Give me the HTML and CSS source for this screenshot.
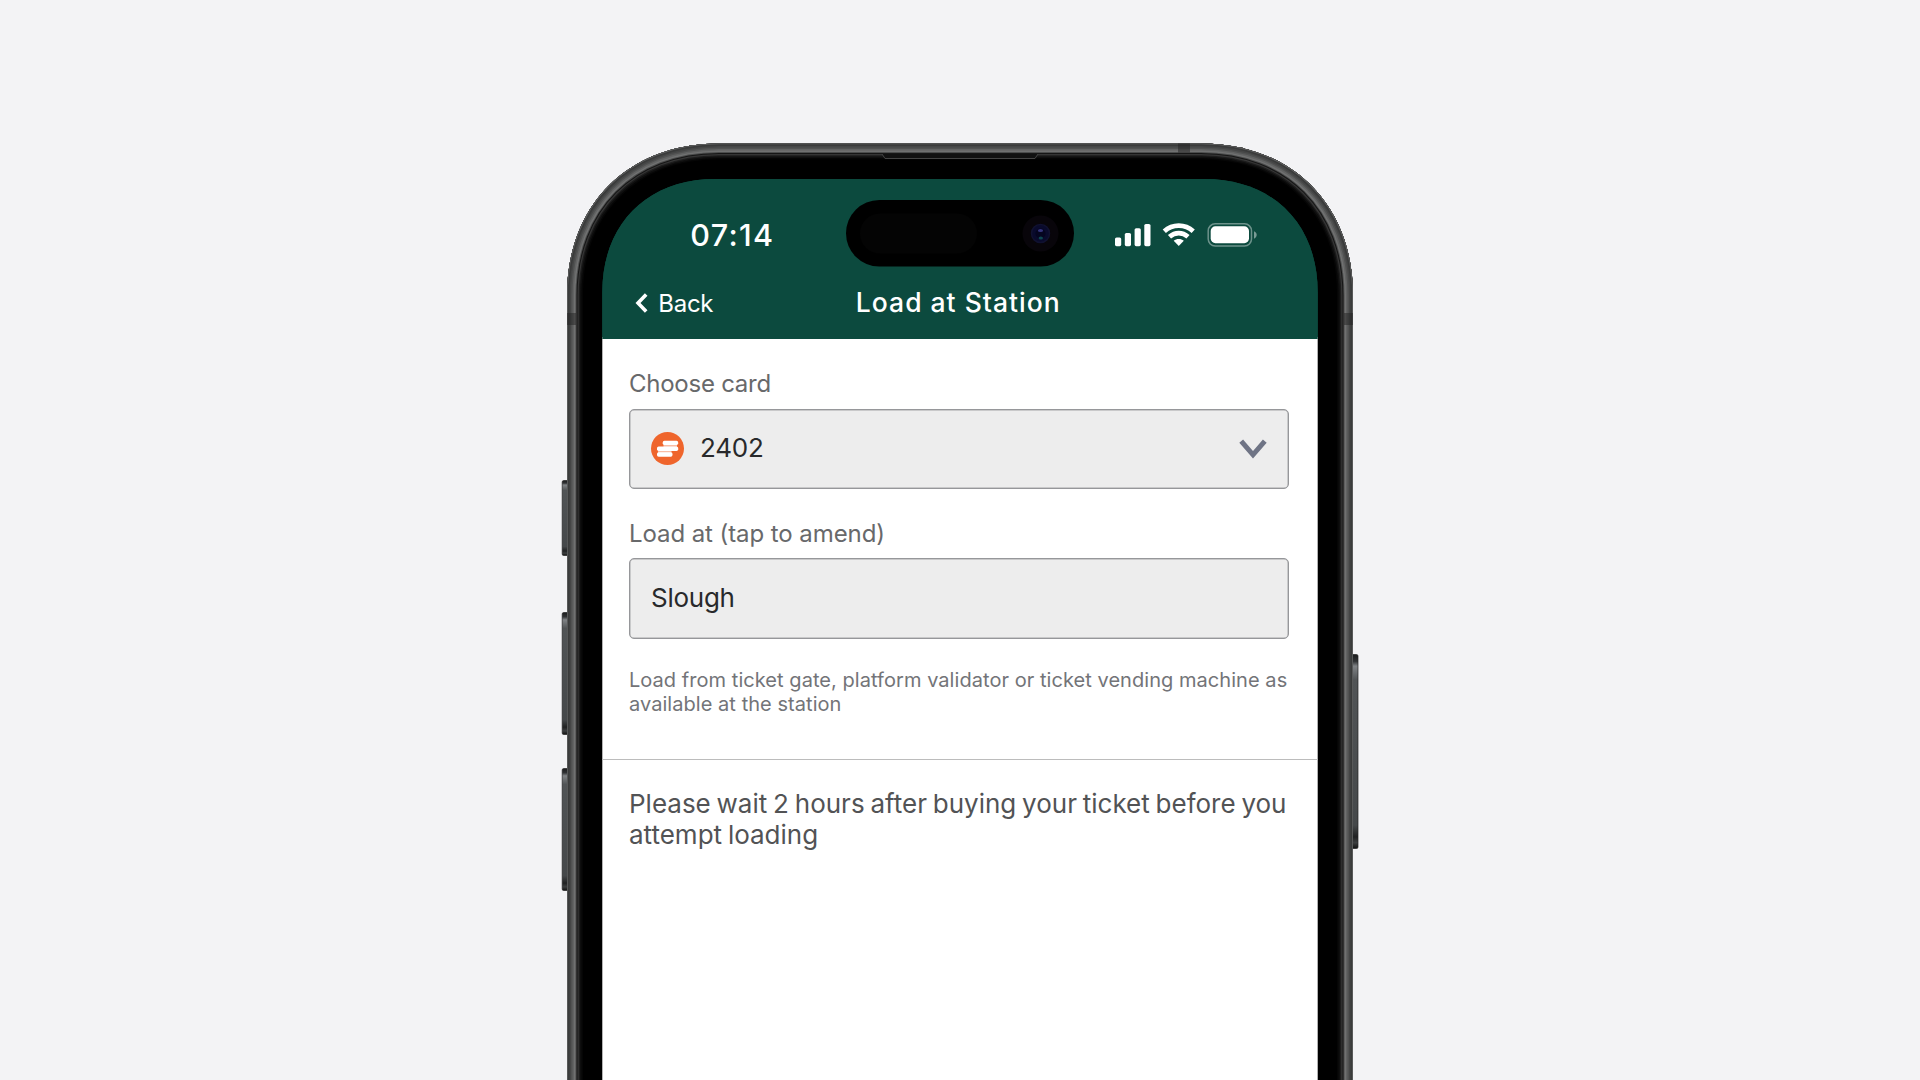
FILE: index.html
```html
<!DOCTYPE html>
<html lang="en">
<head>
<meta charset="utf-8">
<title>Load at Station</title>
<link rel="stylesheet" href="styles.css">
</head>
<body>
<div class="phone">
  <svg class="chassis" width="798" height="937" viewBox="-6 0 798 937" aria-hidden="true">
    <defs>
      <path id="body" d="M0 1300V152.400C0 61.700 61.300 .4 152 .4H634C724.700 .4 786 61.700 786 152.400V1300Z"/>
      <clipPath id="bodyClip"><use href="#body"/></clipPath>
      <linearGradient id="key" x1="0" y1="0" x2="0" y2="1">
        <stop offset="0" stop-color="#1b1c1d"/><stop offset=".035" stop-color="#303234"/><stop offset=".06" stop-color="#808386"/><stop offset=".13" stop-color="#515456"/>
        <stop offset=".88" stop-color="#45484a"/><stop offset=".94" stop-color="#202122"/><stop offset=".97" stop-color="#3c3e3f"/><stop offset="1" stop-color="#111"/>
      </linearGradient>
    </defs>
    <g fill="url(#key)" stroke="#222" stroke-width=".7">
      <rect x="-4.8" y="337.500" width="8" height="75" rx="1.500"/>
      <rect x="-4.8" y="469.500" width="8" height="122" rx="1.500"/>
      <rect x="-4.8" y="625.500" width="8" height="122" rx="1.500"/>
      <rect x="783" y="511.500" width="8" height="194" rx="1.500"/>
    </g>
    <g clip-path="url(#bodyClip)" fill="none">
      <use href="#body" fill="#000"/>
      <use href="#body" stroke="#050505" stroke-width="32"/>
      <use href="#body" stroke="#0e0e0e" stroke-width="29"/>
      <use href="#body" stroke="#1c1c1c" stroke-width="26"/>
      <use href="#body" stroke="#353535" stroke-width="23.500"/>
      <use href="#body" stroke="#161616" stroke-width="21"/>
      <use href="#body" stroke="#4c4d4d" stroke-width="19"/>
      <use href="#body" stroke="#707171" stroke-width="17"/>
      <use href="#body" stroke="#626363" stroke-width="14"/>
      <use href="#body" stroke="#515252" stroke-width="11"/>
      <use href="#body" stroke="#454646" stroke-width="8"/>
      <use href="#body" stroke="#3a3b3b" stroke-width="5"/>
      <use href="#body" stroke="#606161" stroke-width="1.600"/>
      <g fill="#222" fill-opacity=".5">
        <rect x="0" y="170" width="9" height="12"/>
        <rect x="777" y="170" width="9" height="12"/>
        <rect x="611" y="0" width="12" height="9.500"/>
      </g>
      <path d="M315 11L318 15.500H468L471 11Z" fill="#111"/>
      <path d="M315 11L318 15.500H468L471 11" stroke="#444" stroke-width="1"/>
    </g>
  </svg>

  <main class="screen">
    <header class="header">
      <div class="status">
        <span class="time">07:14</span>
        <svg class="indicators" width="144" height="26" viewBox="0 0 144 26" fill="#fff" aria-hidden="true">
          <rect x="1" y="15.500" width="6.200" height="8.700" rx="1.600"/>
          <rect x="10.800" y="11" width="6.200" height="13.200" rx="1.600"/>
          <rect x="20.600" y="6.200" width="6.200" height="18" rx="1.600"/>
          <rect x="30.300" y="2" width="6.200" height="22.200" rx="1.600"/>
          <g fill="none" stroke="#fff" stroke-width="4.700">
            <path d="M50.300 9.300C58.500 1.700 71 1.700 79.200 9.300"/>
            <path d="M55.500 14.800C61 9.900 68.500 9.900 74 14.800"/>
          </g>
          <path d="M59.700 18.800C62.500 16.300 67 16.300 69.800 18.800L64.750 24Z"/>
          <rect x="94.200" y="1.800" width="43.300" height="22.200" rx="7" fill="none" stroke="#fff" stroke-opacity=".4" stroke-width="1.500"/>
          <rect x="96.700" y="4.300" width="38.300" height="16.900" rx="4.700"/>
          <path d="M140 9.300C143.600 10.700 143.600 15.300 140 16.700Z" fill-opacity=".45"/>
        </svg>
      </div>
      <nav class="nav">
        <a class="back">
          <svg width="13" height="20" viewBox="0 0 13 20" fill="none" stroke="#fff" stroke-width="3.600" aria-hidden="true"><path d="M11.200 1.400L3 10L11.200 18.600"/></svg>
          <span>Back</span>
        </a>
        <h1 class="title">Load at Station</h1>
      </nav>
    </header>

    <section class="form">
      <div class="label label-card">Choose card</div>
      <div class="field">
        <svg class="brand" width="33" height="33" viewBox="0 0 33 33" aria-hidden="true">
          <circle cx="16.500" cy="16.500" r="16.500" fill="#ef652c"/>
          <g fill="#fff">
            <path fill="#f9bda4" d="M12.500 12H26V15H12.500ZM7 18.500H20.500V21H7Z"/>
            <rect x="11.700" y="8.800" width="15.500" height="4.200" rx="1.700"/>
            <rect x="6" y="14.400" width="21.200" height="4.500" rx="1.700"/>
            <rect x="6" y="20.200" width="15.500" height="4.500" rx="1.700"/>
          </g>
        </svg>
        <span class="value number">2402</span>
        <svg class="chevron" width="28" height="21" viewBox="0 0 28 21" fill="none" stroke="#6f7485" stroke-width="5" aria-hidden="true"><path d="M2.200 2.200L14 15.800L25.800 2.200"/></svg>
      </div>
      <div class="label label-load">Load at (tap to amend)</div>
      <div class="field"><span class="value">Slough</span></div>
      <p class="hint">Load from ticket gate, platform validator or ticket vending machine as<br>available at the station</p>
    </section>
    <p class="notice">Please wait 2 hours after buying your ticket before you<br>attempt loading</p>
  </main>

  <svg class="island" width="228" height="67" viewBox="0 0 228 67" aria-hidden="true">
    <rect width="228" height="66.500" rx="33.250" fill="#000"/>
    <rect x="14" y="13.500" width="117" height="40" rx="20" fill="#040404"/>
    <circle cx="194.500" cy="33.500" r="18" fill="#08050a"/>
    <circle cx="194.500" cy="33.500" r="9" fill="#090a2c" stroke="#101130" stroke-width="1.500"/>
    <circle cx="194.500" cy="33.500" r="5" fill="#050520"/>
    <ellipse cx="194.500" cy="30.500" rx="2.600" ry="1.500" fill="#34347c"/>
    <ellipse cx="194.800" cy="38" rx="2.200" ry="1.500" fill="#0d4650"/>
  </svg>
</div>
</body>
</html>
```

FILE: styles.css
```css
* { box-sizing: border-box; }

body {
  margin: 0;
  height: 1080px;
  overflow: hidden;
  display: flex;
  justify-content: center;
  align-items: flex-start;
  background: #f3f3f5;
  font-family: Inter, "Liberation Sans", sans-serif;
}

.phone {
  position: relative;
  width: 786px;
  height: 937px;
  margin-top: 143px;
  padding: 36px 35.300px 0;
}

.chassis {
  position: absolute;
  top: 0;
  left: -6px;
}

.screen {
  position: relative;
  height: 901px;
  background: linear-gradient(#0c4a3e 158px, #fff 158px);
  clip-path: path("M0 901V113C0 45 45 0 113 0H602.400C670.400 0 715.400 45 715.400 113V901Z");
}

.header {
  height: 160px;
  background: #0c4a3e;
  color: #fff;
}

.status {
  display: flex;
  justify-content: space-between;
  align-items: center;
  height: 108px;
  padding: 4px 60px 0 88px;
}

.time {
  font-size: 30.500px;
  font-weight: 550;
  line-height: 36px;
  letter-spacing: 1.300px;
}

.nav {
  display: grid;
  grid-template-columns: 1fr auto 1fr;
  align-items: center;
  height: 31px;
  padding: 0 36.500px 0 33px;
}

.back {
  display: flex;
  align-items: center;
  gap: 10px;
  font-size: 24px;
  line-height: 31px;
  letter-spacing: -.3px;
}

.back span { padding-top: 1px; }

.title {
  margin: -2px 0 0;
  font-size: 26.500px;
  font-weight: 550;
  line-height: 31px;
  letter-spacing: 1px;
}

.form {
  height: 421px;
  padding: 30px 29px 0 26.700px;
  border-bottom: 1px solid #bcbcbc;
}

.label {
  height: 29px;
  margin-bottom: 10px;
  color: #68696b;
  font-size: 24px;
  line-height: 29px;
  letter-spacing: -.08px;
  white-space: nowrap;
}

.label-card {
  margin-bottom: 10.500px;
  letter-spacing: -.25px;
}

.field {
  display: flex;
  align-items: center;
  height: 80.500px;
  padding: 0 21px;
  background: #ededed;
  border: 1.500px solid #96979a;
  border-radius: 5px;
  box-shadow: inset 0 0 0 .5px #a5a6a8;
}

.label-load { margin-top: 30px; }

.value {
  color: #28292b;
  font-size: 26px;
  line-height: 32px;
  letter-spacing: -.25px;
}

.number {
  margin-left: 16px;
  margin-top: -1px;
}

.chevron {
  margin-left: auto;
  margin-top: 2px;
}

.hint {
  margin: 29px 0 0;
  color: #737478;
  font-size: 20px;
  line-height: 24px;
  letter-spacing: .05px;
  white-space: nowrap;
}

.notice {
  margin: 28px 0 0 26.700px;
  color: #525355;
  font-size: 26px;
  line-height: 31px;
  letter-spacing: 0;
  word-spacing: -1.500px;
  white-space: nowrap;
}

.island {
  position: absolute;
  top: 56.500px;
  left: 279px;
}
```
